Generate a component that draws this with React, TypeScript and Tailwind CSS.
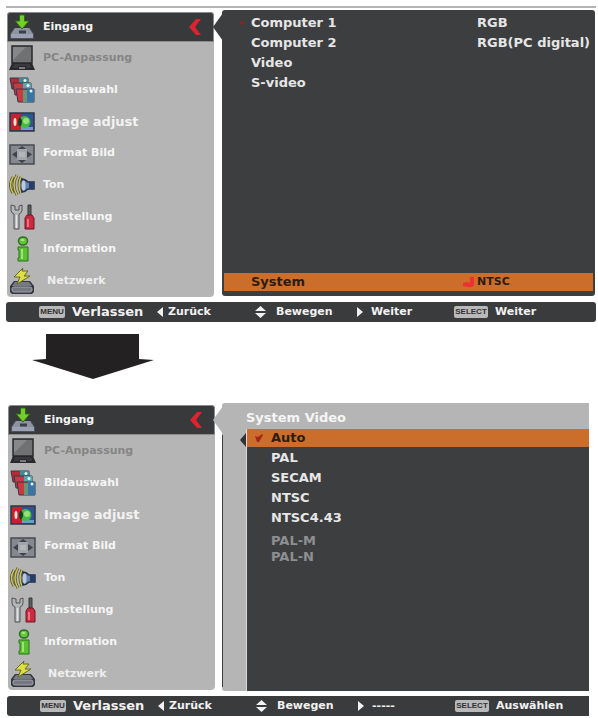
import React from "react";

type IconProps = { name: string };

function MenuIcon({ name }: IconProps) {
  return (
    <svg viewBox="0 0 26 26" className="h-[26px] w-[26px] shrink-0" aria-hidden="true">
      {name === "input" && (
        <>
          <path d="M5 14H21L25 20V25H1V20Z" fill="#4d535e" />
          <path d="M6 14H20L24 20H2Z" fill="#8d93a0" />
          <path d="M2 20H24V24H2Z" fill="#9ba0b4" />
          <path d="M10 18H17" stroke="#3b3f4c" strokeWidth="3" />
          <path d="M10.500 1H15.500V7H20L13 15L6 7H10.500Z" fill="#74cf2a" stroke="#2d6a12" />
        </>
      )}
      {name === "pc" && (
        <>
          <path d="M3 1H23V18H3Z" fill="#6f7173" stroke="#2a2a2c" strokeWidth="1.500" />
          <path d="M4 2H17L4 15Z" fill="#858789" />
          <path d="M3 18H23L26 25H0Z" fill="#29292c" />
          <path d="M5 20H21M4 22H9M17 22H22" stroke="#4c4c50" />
          <path d="M10 22H16V24H10Z" fill="#7b7b7f" />
        </>
      )}
      {name === "select" && (
        <>
          <path d="M1 1H19V12H3Z" fill="#b82936" stroke="#343a48" />
          <path d="M10 1H19V7H10Z" fill="#3d8c91" />
          <path d="M4 6H22V18H6Z" fill="#c43b44" stroke="#343a48" />
          <path d="M14 6H22V12H14Z" fill="#5aa3aa" />
          <path d="M7 12H25V25H9Z" fill="#cf3740" stroke="#343a48" />
          <path d="M18 12H25V25H18Z" fill="#3975a4" />
          <path d="M14 13H18V25H14Z" fill="#679575" />
          <circle cx="16" cy="3.500" r="1.500" fill="#e4f4f4" />
          <circle cx="19" cy="8.500" r="1.500" fill="#e4f4f4" />
          <circle cx="22" cy="14" r="1.500" fill="#e4f4f4" />
        </>
      )}
      {name === "image" && (
        <>
          <path d="M1 4H25V22H1Z" fill="#355194" stroke="#303644" strokeWidth="1.500" />
          <path d="M2 5H12V21H2Z" fill="#c9202e" />
          <path d="M12 18H24V21H12Z" fill="#6f9ccb" />
          <circle cx="15.500" cy="13" r="6" fill="#46bb42" />
          <circle cx="17" cy="12" r="3" fill="#98e078" />
          <path d="M11 8A7 7 0 0 0 11 18A8 8 0 0 0 11 8" fill="#173c20" />
          <ellipse cx="6" cy="13" rx="1.500" ry="4" fill="#ffe0d0" />
        </>
      )}
      {name === "format" && (
        <>
          <path d="M1 4H25V23H1Z" fill="#85888e" stroke="#474b52" strokeWidth="1.500" />
          <path d="M8 8H18V19H8Z" fill="#a2a5aa" />
          <path d="M13 5L17 8H9ZM13 22L9 19H17ZM3 13.500L8 10V17ZM23 13.500L18 10V17Z" fill="#3f434a" />
          <path d="M10 11H16V16H10Z" fill="#b4b6ba" />
        </>
      )}
      {name === "sound" && (
        <>
          <path d="M12 5Q8 13 12 21M8 3Q2 13 8 23M4 5Q-1 13 4 21" fill="none" stroke="#55532b" strokeWidth="3" />
          <path d="M12 5Q8 13 12 21M8 3Q2 13 8 23M4 5Q-1 13 4 21" fill="none" stroke="#c8c35e" strokeWidth="1.500" />
          <path d="M13 7Q16 7 19 10H25V17H19Q16 20 13 20Z" fill="#6782ad" stroke="#222e4b" strokeWidth="1.500" />
          <path d="M20 10H25V17H20Z" fill="#283c68" />
          <ellipse cx="14.500" cy="13.500" rx="2" ry="5" fill="#b8cbe0" />
        </>
      )}
      {name === "setting" && (
        <>
          <path d="M2 1V6Q2 9 5 10V25H10V10Q13 9 13 6V1L10 2V6H6V2Z" fill="#b3b5b7" stroke="#505356" />
          <path d="M7.500 11V24" stroke="#e4e5e5" strokeWidth="1.500" />
          <path d="M19 1H22V12H19Z" fill="#596063" stroke="#35383b" />
          <path d="M18 11H23L25 14V25H16V14Z" fill="#c92c40" stroke="#6c1824" />
          <path d="M19 15V23" stroke="#ef7180" strokeWidth="2" />
        </>
      )}
      {name === "info" && (
        <>
          <ellipse cx="14" cy="5" rx="4.500" ry="4" fill="#63c63a" stroke="#2b701e" strokeWidth="1.500" />
          <ellipse cx="13.500" cy="4" rx="2" ry="1" fill="#b0ea86" />
          <path d="M9 11H19V25H9V22H10V14H9Z" fill="#5cc132" stroke="#2b701e" />
          <path d="M13 13V23" stroke="#9de474" strokeWidth="2" />
        </>
      )}
      {name === "network" && (
        <>
          <path d="M5 13H21L25 18V24L23 26H3L1 24V18Z" fill="#34373d" />
          <path d="M6 14H20L23 18H3Z" fill="#777b80" />
          <rect x="3" y="19" width="20" height="5" rx="2" fill="#747883" stroke="#a2a5ad" />
          <path d="M14 0L5 9H11L8 16L21 8H15L19 3H13Z" fill="#dedf43" stroke="#686b27" />
        </>
      )}
    </svg>
  );
}

const menu = [
  { icon: "input", label: "Eingang" },
  { icon: "pc", label: "PC-Anpassung" },
  { icon: "select", label: "Bildauswahl" },
  { icon: "image", label: "Image adjust" },
  { icon: "format", label: "Format Bild" },
  { icon: "sound", label: "Ton" },
  { icon: "setting", label: "Einstellung" },
  { icon: "info", label: "Information" },
  { icon: "network", label: "Netzwerk" },
];

function labelStyle(icon: string) {
  if (icon === "pc") return "text-[11px] text-[#858585]";
  if (icon === "image") return "text-[13px] text-[#f2f2f2]";
  if (icon === "network") return "pl-1 text-[11px] text-[#eeeeee]";
  return "text-[11px] text-[#f6f6f6]";
}

function Sidebar() {
  return (
    <nav className="flex h-[285px] w-[207px] shrink-0 flex-col rounded-[4px] bg-[#b5b5b5]">
      {menu.map((item, i) => (
        <button
          key={item.icon}
          type="button"
          disabled={item.icon === "pc"}
          className={
            i === 0
              ? "flex h-[30px] items-center gap-2 rounded-t-[3px] border border-[#8b8b8b] bg-[#38393b] pr-3 pl-px text-left"
              : "flex flex-1 items-center gap-2 pl-[2px] text-left"
          }
        >
          <MenuIcon name={item.icon} />
          <span className={`flex-1 font-bold ${labelStyle(item.icon)}`}>{item.label}</span>
          {i === 0 && (
            <svg viewBox="0 0 12 16" className="h-4 w-3" aria-hidden="true">
              <path d="M7 0H12L6 8L12 16H7L0 8Z" fill="#dc2430" />
            </svg>
          )}
        </button>
      ))}
    </nav>
  );
}

function Notch({ className }: { className: string }) {
  return (
    <svg viewBox="0 0 10 28" className={`absolute top-[3px] -left-[9px] h-7 w-[10px] ${className}`} aria-hidden="true">
      <path d="M10 0L0 14L10 28Z" fill="currentColor" />
    </svg>
  );
}

function Key({ children, className }: { children: string; className: string }) {
  return (
    <kbd
      className={`flex h-3 items-center justify-center rounded-[2px] bg-[#b9b9b9] font-['Liberation_Sans',Arial,sans-serif] font-bold text-[#303032] ${className}`}
    >
      {children}
    </kbd>
  );
}

function Footer({ next, select, className }: { next: string; select: string; className: string }) {
  return (
    <footer
      className={`mt-[5px] grid h-5 grid-cols-[118px_98px_102px_97px_1fr] items-center bg-[#3a3b3d] pl-[33px] text-[11px] font-bold text-[#f1f1f1] ${className}`}
    >
      <span className="flex items-center gap-[7px]">
        <Key className="w-[26px] text-[8px]">MENU</Key>
        <span className="text-[13px] leading-5">Verlassen</span>
      </span>
      <span className="flex items-center gap-[5px]">
        <svg viewBox="0 0 6 10" className="h-[10px] w-[6px]" aria-hidden="true">
          <path d="M6 0V10L0 5Z" fill="currentColor" />
        </svg>
        Zurück
      </span>
      <span className="flex items-center gap-[10px]">
        <svg viewBox="0 0 11 12" className="h-3 w-[11px]" aria-hidden="true">
          <path d="M5.500 0L11 5H0ZM0 7H11L5.500 12Z" fill="currentColor" />
        </svg>
        Bewegen
      </span>
      <span className="flex items-center gap-2">
        <svg viewBox="0 0 6 10" className="h-[10px] w-[6px]" aria-hidden="true">
          <path d="M0 0L6 5L0 10Z" fill="currentColor" />
        </svg>
        {next}
      </span>
      <span className="flex items-center gap-[7px]">
        <Key className="w-[34px] text-[8px]">SELECT</Key>
        {select}
      </span>
    </footer>
  );
}

const inputs = [
  { name: "Computer 1", value: "RGB" },
  { name: "Computer 2", value: "RGB(PC digital)" },
  { name: "Video", value: "" },
  { name: "S-video", value: "" },
];

const systems = ["PAL", "SECAM", "NTSC", "NTSC4.43"];
const unavailable = ["PAL-M", "PAL-N"];

export default function App() {
  return (
    <main className="bg-white pt-[6px] pr-[2px] pl-[6px] font-['DejaVu_Sans',Verdana,sans-serif]">
      <div className="h-[2px] bg-[#b4b4b4]" />

      <section aria-label="Eingang" className="pt-[2px]">
        <div className="flex gap-2 pr-px pl-px">
          <div className="pt-[2px]">
            <Sidebar />
          </div>
          <div className="relative flex h-[286px] flex-1 flex-col rounded-[3px] bg-[#3c3e40] pt-[3px] pb-[5px] text-[13px] font-bold text-[#e6e6e6]">
            <Notch className="text-[#3c3e40]" />
            <ul className="flex-1">
              {inputs.map((item, i) => (
                <li key={item.name}>
                  <button
                    type="button"
                    className="grid h-5 w-full grid-cols-[18px_226px_1fr] items-center pl-[11px] text-left leading-5 whitespace-nowrap"
                  >
                    <span className="flex justify-center">
                      {i === 0 && <span className="h-1 w-1 rounded-full bg-[#8a2328]" />}
                    </span>
                    <span>{item.name}</span>
                    <span>{item.value}</span>
                  </button>
                </li>
              ))}
            </ul>
            <button
              type="button"
              className="mx-[2px] grid h-[18px] grid-cols-[212px_14px_1fr] items-center bg-[#cb6e2b] pl-[27px] text-left leading-[18px] text-[#2e1c12]"
            >
              <span>System</span>
              <svg viewBox="0 0 12 11" className="h-[11px] w-3" aria-hidden="true">
                <path d="M7 0H11V8Q9 11 5 10L0 9V6L4 5L7 6Z" fill="#ef3032" />
              </svg>
              <span className="text-[11px]">NTSC</span>
            </button>
          </div>
        </div>
        <Footer next="Weiter" select="Weiter" className="rounded-[3px]" />
      </section>

      <svg viewBox="0 0 122 45" className="mt-3 ml-[26px] h-[45px] w-[122px]" aria-hidden="true">
        <path d="M14 0H107V25L122 26L61 45L0 26L14 25Z" fill="#242122" />
      </svg>

      <section aria-label="System Video" className="mt-6 pr-[7px] pl-px">
        <div className="flex gap-[7px] pl-px">
          <div className="pt-[2px]">
            <Sidebar />
          </div>
          <div className="relative flex h-[288px] flex-1 flex-col rounded-l-[3px] bg-[#b5b5b5] pl-6 text-[13px] font-bold text-[#e6e6e6]">
            <Notch className="text-[#b5b5b5]" />
            <div className="absolute top-8 bottom-1 left-0 w-px bg-[#3c3e40]" />
            <h2 className="h-[26px] pt-[5px] leading-5 text-[#f5f5f5]">System Video</h2>
            <div className="relative flex-1 border-l border-[#dadada] bg-[#3c3e40]">
              <svg viewBox="0 0 6 14" className="absolute top-1 -left-[7px] h-[14px] w-[6px]" aria-hidden="true">
                <path d="M6 0L0 7L6 14Z" fill="#303234" />
              </svg>
              <button
                type="button"
                className="flex h-[18px] w-full items-center gap-2 bg-[#cb6e2b] pl-2 text-left leading-[18px] text-[#2e1c12]"
              >
                <svg viewBox="0 0 8 8" className="h-2 w-2" aria-hidden="true">
                  <path d="M0 2L3 3L7 0L8 1L4 8H2Z" fill="#a5261d" />
                </svg>
                Auto
              </button>
              <ul className="pt-px">
                {systems.map((name) => (
                  <li key={name} className="flex">
                    <button type="button" className="h-5 w-full pl-6 text-left leading-5">
                      {name}
                    </button>
                  </li>
                ))}
              </ul>
              <ul className="pt-[5px]">
                {unavailable.map((name) => (
                  <li key={name} className="flex">
                    <button type="button" disabled className="h-4 w-full pl-6 text-left leading-4 text-[#8e8f90]">
                      {name}
                    </button>
                  </li>
                ))}
              </ul>
            </div>
          </div>
        </div>
        <Footer next="-----" select="Auswählen" className="rounded-l-[3px]" />
      </section>
    </main>
  );
}
